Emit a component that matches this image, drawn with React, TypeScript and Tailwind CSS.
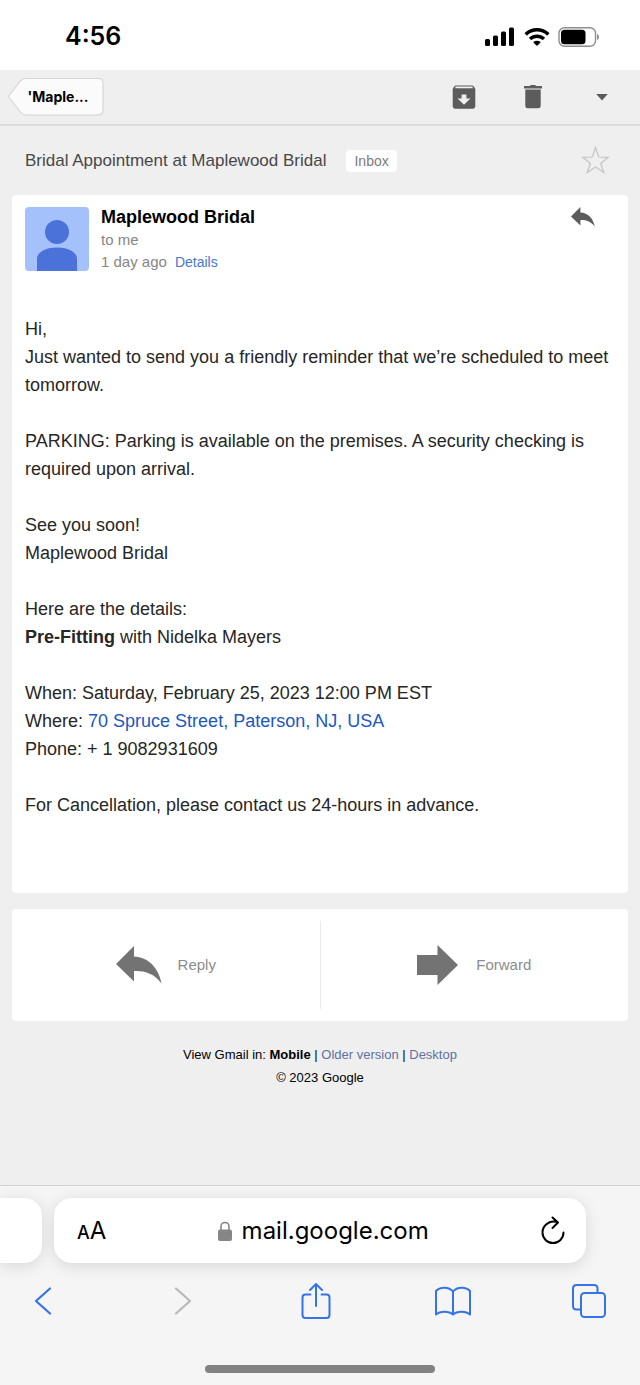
import type { ReactNode } from "react";

interface IconButtonProps {
  label: string;
  children: ReactNode;
  className?: string;
  disabled?: boolean;
}

function IconButton({ label, children, className, disabled }: IconButtonProps) {
  return (
    <button
      type="button"
      aria-label={label}
      disabled={disabled}
      className={`flex shrink-0 items-center justify-center ${className ?? ""}`}
    >
      {children}
    </button>
  );
}

function StatusBar() {
  return (
    <div className="flex h-[70px] items-center justify-between bg-white pl-[65px] pr-10 pt-1 font-['Inter',sans-serif]">
      <span className="text-[25px] font-semibold text-black">4:56</span>
      <div className="flex items-center gap-2">
        <svg width="31" height="20" viewBox="0 0 31 20" aria-hidden="true">
          <rect x="0" y="12" width="5" height="7" rx="1.5" />
          <rect x="8" y="8.5" width="5" height="10.5" rx="1.5" />
          <rect x="16" y="4.5" width="5" height="14.5" rx="1.5" />
          <rect x="24" y="0.5" width="5" height="18.5" rx="1.5" />
        </svg>
        <svg width="26" height="20" viewBox="0 0 26 20" aria-hidden="true">
          <path d="M13 1C8.300 1 4 2.800.9 5.700c-.3.300-.3.700 0 1l1.500 1.500c.3.300.7.300 1 0C5.900 5.900 9.300 4.600 13 4.600s7.100 1.300 9.600 3.600c.3.300.7.300 1 0l1.500-1.500c.3-.3.300-.7 0-1C22 2.800 17.700 1 13 1Z" />
          <path d="M13 7.400c-3 0-5.700 1.100-7.700 2.900-.3.300-.3.700 0 1l1.600 1.500c.3.300.7.300 1 0 1.400-1.200 3.200-1.900 5.100-1.900s3.700.7 5.100 1.900c.3.300.7.300 1 0l1.600-1.500c.3-.3.300-.7 0-1-2-1.800-4.700-2.900-7.700-2.900Z" />
          <path d="M13 13.700c-1.300 0-2.400.4-3.300 1.100-.3.300-.3.700 0 1l2.800 2.800c.3.300.7.300 1 0l2.800-2.800c.3-.3.300-.7 0-1-.9-.7-2-1.100-3.300-1.100Z" />
        </svg>
        <svg width="42" height="20" viewBox="0 0 42 20" aria-hidden="true">
          <rect x="1" y="0.7" width="36.5" height="18.6" rx="5.5" fill="#fff" stroke="#8e8e8e" strokeWidth="1.4" />
          <rect x="3" y="2.7" width="24.5" height="14.6" rx="3.5" />
          <path d="M39 7c1.500.6 2 1.600 2 3s-.5 2.400-2 3Z" fill="#8e8e8e" />
        </svg>
      </div>
    </div>
  );
}

function MailToolbar() {
  return (
    <header className="flex h-14 items-center border-b-2 border-[#dcdcdc] bg-[#efefef] pl-2 pr-[26px] text-[#5c5c5c]">
      <button
        type="button"
        className="relative h-10 w-24 pl-1 text-sm font-bold text-black font-['Inter',sans-serif]"
      >
        <svg className="absolute inset-0" width="96" height="40" viewBox="0 0 96 40" aria-hidden="true">
          <path
            d="M1.200 18.500 12 4.500C14 1.800 15.500 1.500 17.500 1.500H90q5 0 5 5V33q0 5-5 5H17.500c-2 0-3.500-.8-5.500-3.500L1.200 20.500q-.7-1 0-2Z"
            fill="#fbfbfb"
            stroke="#d6d6d6"
            strokeWidth="1.2"
          />
        </svg>
        <span className="relative">'Maple...</span>
      </button>
      <div className="ml-auto flex items-center gap-[45px]">
        <IconButton label="Archive" className="h-6 w-6">
          <svg width="24" height="24" viewBox="0 0 24 24" fill="currentColor" aria-hidden="true">
            <path
              fillRule="evenodd"
              d="M4 .5h16q1 0 1.600.8l1.200 1.700q.5.700.5 1.500V21q0 2.700-2.700 2.700H3.400Q.7 23.700.7 21V4.500q0-.8.5-1.500l1.200-1.700Q3 .5 4 .5ZM3.800 1.600 2.900 3.200h18.200l-.9-1.600ZM9.600 9.500v4H5.500l6.500 6.200 6.500-6.200h-4.100v-4Z"
            />
          </svg>
        </IconButton>
        <IconButton label="Delete" className="h-6 w-6">
          <svg width="24" height="24" viewBox="0 0 24 24" fill="currentColor" aria-hidden="true">
            <path d="M3 1h5.500Q9.500-.2 12-.2T15.500 1H21v2.600H3ZM4.300 4.600h15.400V21q0 2.300-2.400 2.300H6.700Q4.300 23.300 4.300 21Z" />
          </svg>
        </IconButton>
        <IconButton label="More actions" className="h-6 w-6">
          <svg width="24" height="24" viewBox="0 0 24 24" fill="currentColor" aria-hidden="true">
            <path d="M6.200 9h11.600L12 15.500Z" />
          </svg>
        </IconButton>
      </div>
    </header>
  );
}

function SubjectRow() {
  return (
    <div className="flex h-[69px] items-center pl-[25px] pr-[30px]">
      <h1 className="text-[17px] text-[#484848]">Bridal Appointment at Maplewood Bridal</h1>
      <span className="ml-5 rounded-sm bg-white px-2 text-sm leading-[22px] text-[#7c7c7c]">Inbox</span>
      <IconButton label="Star message" className="ml-auto">
        <svg width="29" height="30" viewBox="0 0 29 30" fill="none" stroke="#c4c4c4" strokeWidth="1.2" aria-hidden="true">
          <path d="M14.500 1.500 17.700 11 27.200 11.300 19.700 17.500 22.800 26.500 14.500 21 6.200 26.500 9.300 17.500 1.800 11.300 11.300 11Z" />
        </svg>
      </IconButton>
    </div>
  );
}

function Message() {
  return (
    <article className="mx-3 rounded bg-white px-[13px] pb-[74px] pt-3">
      <div className="flex">
        <svg width="64" height="64" viewBox="0 0 64 64" className="shrink-0 rounded" role="img" aria-label="Maplewood Bridal">
          <rect width="64" height="64" fill="#a5c1fb" />
          <circle cx="32" cy="25" r="12" fill="#4b72d8" />
          <path d="M12 64V52c0-7 9-11.500 20-11.500S52 45 52 52v12Z" fill="#4b72d8" />
        </svg>
        <div className="ml-3 text-[15px] text-[#868686]">
          <h2 className="text-lg font-bold leading-5 text-black">Maplewood Bridal</h2>
          <p className="pt-1 leading-[18px]">to me</p>
          <p className="pt-1 leading-[18px]">
            1 day ago
            <a href="#details" className="ml-2 text-sm leading-[18px] text-[#4a76d0]">
              Details
            </a>
          </p>
        </div>
        <IconButton label="Reply" className="ml-auto mr-5 self-start">
          <svg width="24" height="20" viewBox="0 0 46 38" fill="#5c5c5c" aria-hidden="true">
            <path d="M0 18 18 0v10.500C33 11 43 23 45.500 37.500 38 27 28 24.500 18 25v10.500Z" />
          </svg>
        </IconButton>
      </div>

      <div className="mt-11 text-lg leading-7 text-[#262626]">
        <p>Hi,</p>
        <p>Just wanted to send you a friendly reminder that we’re scheduled to meet tomorrow.</p>
        <p className="mt-7">
          PARKING: Parking is available on the premises. A security checking is required upon arrival.
        </p>
        <p className="mt-7">See you soon!</p>
        <p>Maplewood Bridal</p>
        <p className="mt-7">Here are the details:</p>
        <p>
          <strong>Pre-Fitting</strong> with Nidelka Mayers
        </p>
        <p className="mt-7">When: Saturday, February 25, 2023 12:00 PM EST</p>
        <p>
          Where:{" "}
          <a href="#map" className="text-[#2157bd]">
            70 Spruce Street, Paterson, NJ, USA
          </a>
        </p>
        <p>Phone: + 1 9082931609</p>
        <p className="mt-7">For Cancellation, please contact us 24-hours in advance.</p>
      </div>
    </article>
  );
}

function ReplyActions() {
  return (
    <div className="mx-3 mt-4 flex rounded bg-white py-3 text-[15px] text-[#8c8c8c]">
      <button type="button" className="flex h-[88px] flex-1 items-center justify-center gap-4 border-r border-[#ebebeb]">
        <svg width="46" height="38" viewBox="0 0 46 38" fill="#737373" aria-hidden="true">
          <path d="M0 18 18 0v10.500C33 11 43 23 45.500 37.500 38 27 28 24.500 18 25v10.500Z" />
        </svg>
        Reply
      </button>
      <button type="button" className="flex h-[88px] flex-1 items-center justify-center gap-[18px]">
        <svg width="41" height="40" viewBox="0 0 41 40" fill="#737373" aria-hidden="true">
          <path d="M0 10h20.500V0L41 20 20.500 40V30H0Z" />
        </svg>
        Forward
      </button>
    </div>
  );
}

function GmailFooter() {
  return (
    <footer className="mt-[22px] text-center text-[13px] leading-[23px] text-black">
      <p>
        View Gmail in: <strong>Mobile</strong> |{" "}
        <a href="#older" className="text-[#62719f]">
          Older version
        </a>{" "}
        |{" "}
        <a href="#desktop" className="text-[#62719f]">
          Desktop
        </a>
      </p>
      <p>© 2023 Google</p>
    </footer>
  );
}

function BrowserBar() {
  return (
    <div className="mt-auto overflow-hidden border-t border-[#d2d2d2] bg-[#f5f5f5] pb-3 pt-3">
      <div className="flex gap-3">
        <div className="h-[65px] w-[42px] rounded-r-[18px] bg-white shadow-[0_3px_16px_rgba(0,0,0,0.12)]" />
        <div className="mr-[54px] flex flex-1 items-center justify-between rounded-[18px] bg-white pl-[23px] pr-5 shadow-[0_3px_16px_rgba(0,0,0,0.12)] font-['Inter',sans-serif] text-black">
          <button type="button" aria-label="Page settings" className="flex items-baseline">
            <span className="text-lg font-medium">A</span>
            <span className="text-2xl">A</span>
          </button>
          <div className="flex items-center gap-[10px]">
            <svg width="14" height="20" viewBox="0 0 14 20" aria-hidden="true">
              <path d="M3 9V5.500a4 4 0 0 1 8 0V9" fill="none" stroke="#868686" strokeWidth="1.6" />
              <rect x="0" y="8.5" width="14" height="11.5" rx="2" fill="#868686" />
            </svg>
            <input
              type="text"
              aria-label="Address"
              defaultValue="mail.google.com"
              className="field-sizing-content bg-transparent text-2xl outline-none"
            />
          </div>
          <IconButton label="Reload">
            <svg width="26" height="30" viewBox="0 0 26 30" fill="none" stroke="#000" strokeWidth="2" strokeLinecap="round" strokeLinejoin="round" aria-hidden="true">
              <path d="M18 6.500C10 3.500 2.500 9 2.500 16.500a10.500 10.500 0 0 0 21 0M12.500 1.500l5.500 5-5.500 5.500" />
            </svg>
          </IconButton>
        </div>
      </div>

      <nav aria-label="Browser" className="mt-4 flex items-center justify-between pl-[19px] pr-[27px] text-[#3473e8]">
        <IconButton label="Back" className="h-11 w-12">
          <svg width="20" height="30" viewBox="0 0 20 30" fill="none" stroke="currentColor" strokeWidth="2.2" strokeLinecap="round" strokeLinejoin="round" aria-hidden="true">
            <path d="M17 2.500 3 15 17 27.500" />
          </svg>
        </IconButton>
        <IconButton label="Forward" className="h-11 w-12 text-[#b8b8b8]" disabled>
          <svg width="24" height="30" viewBox="0 0 24 30" fill="none" stroke="currentColor" strokeWidth="2.2" strokeLinecap="round" strokeLinejoin="round" aria-hidden="true">
            <path d="M8 2.500 22 15 8 27.500" />
          </svg>
        </IconButton>
        <IconButton label="Share" className="h-11 w-12">
          <svg width="30" height="38" viewBox="0 0 30 38" fill="none" stroke="currentColor" strokeWidth="2" strokeLinecap="round" strokeLinejoin="round" aria-hidden="true">
            <path d="M9.500 12.500h-5Q1.500 12.500 1.500 15.500V33q0 3 3 3h21q3 0 3-3V15.500q0-3-3-3h-5M15 24V2M9 8l6-6 6 6" />
          </svg>
        </IconButton>
        <IconButton label="Bookmarks" className="h-11 w-12">
          <svg width="36" height="30" viewBox="0 0 36 30" fill="none" stroke="currentColor" strokeWidth="2" strokeLinejoin="round" aria-hidden="true">
            <path d="M18 5.500C14 .5 5 .5 1 5v23.500c4-3.800 13-3.800 17 0 4-3.800 13-3.800 17 0V5C31 .5 22 .5 18 5.500ZM18 5.500v23" />
          </svg>
        </IconButton>
        <IconButton label="Tabs" className="h-11 w-12">
          <svg width="34" height="34" viewBox="0 0 34 34" fill="none" stroke="currentColor" strokeWidth="2" strokeLinejoin="round" aria-hidden="true">
            <rect x="9" y="9" width="24" height="24" rx="3.5" />
            <path d="M9 25.500H4.500Q1 25.500 1 22V4.500Q1 1 4.500 1H22q3.500 0 3.500 3.500V9" />
          </svg>
        </IconButton>
      </nav>

      <div className="mx-auto mt-[42px] h-2 w-[230px] rounded-full bg-[#828282]" />
    </div>
  );
}

export default function App() {
  return (
    <div className="flex min-h-screen flex-col bg-[#efefef] font-['Liberation_Sans',Arial,sans-serif]">
      <StatusBar />
      <MailToolbar />
      <main>
        <SubjectRow />
        <Message />
        <ReplyActions />
      </main>
      <GmailFooter />
      <BrowserBar />
    </div>
  );
}
